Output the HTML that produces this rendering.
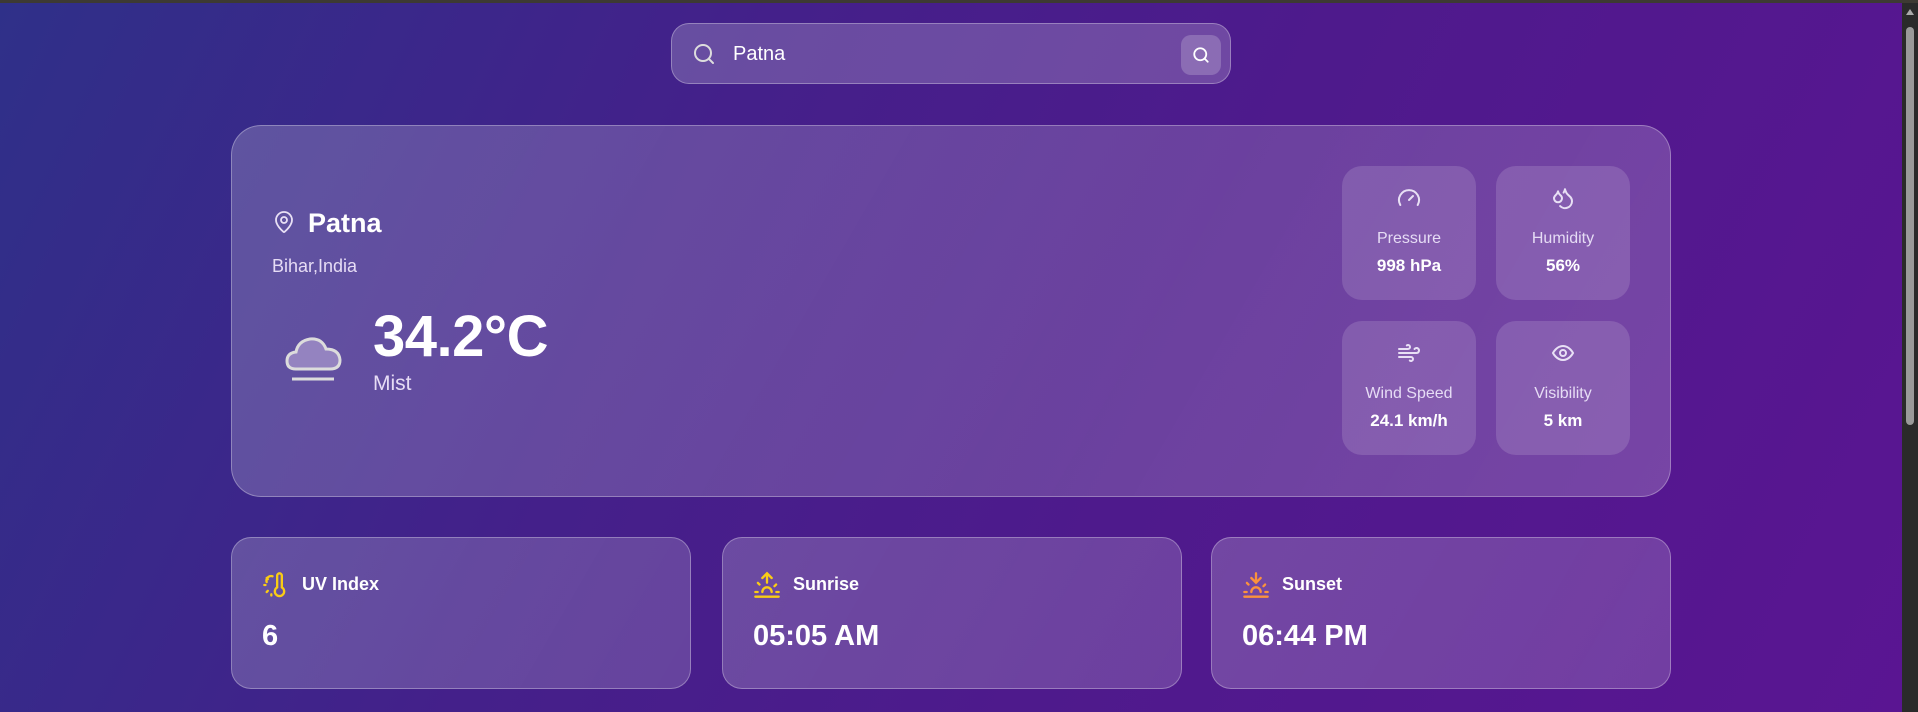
<!DOCTYPE html>
<html><head><meta charset="utf-8"><style>
*{box-sizing:border-box;margin:0;padding:0}
html,body{width:1918px;height:712px;overflow:hidden}
body{font-family:"Liberation Sans",sans-serif;color:#fff;background:linear-gradient(115deg,#2f3089 0%,#44208a 35%,#4e1a8c 60%,#5a1592 100%);position:relative}
.topbar{position:absolute;left:0;top:0;width:1918px;height:3px;background:#3d3a33}
.sb{position:absolute;right:0;top:3px;width:16px;height:709px;background:#2a2a2a}
.sb .th{position:absolute;left:4px;top:24px;width:8px;height:398px;background:#9a9a9a;border-radius:4px}
.sb .ar{position:absolute;left:4px;top:6px;width:0;height:0;border-left:4px solid transparent;border-right:4px solid transparent;border-bottom:6px solid #aaa}
.glass{background:rgba(255,255,255,0.17);border:1px solid rgba(255,255,255,0.3)}
.search{position:absolute;left:671px;top:23px;width:560px;height:61px;border-radius:18px;background:rgba(255,255,255,0.2)}
.search .t{position:absolute;left:61px;top:19px;font-size:20px;color:#fff}
.search .ic{position:absolute;left:20px;top:18px}
.search .btn{position:absolute;right:9px;top:11px;width:40px;height:40px;border-radius:10px;background:rgba(255,255,255,0.2)}
.main{position:absolute;left:231px;top:125px;width:1440px;height:372px;border-radius:30px;background:linear-gradient(120deg,rgba(255,255,255,0.2),rgba(255,255,255,0.17) 60%,rgba(255,255,255,0.2))}
.city{position:absolute;left:76px;top:82px;font-size:27px;font-weight:bold}
.pin{position:absolute;left:40px;top:84px}
.region{position:absolute;left:40px;top:130px;font-size:18px;color:#e6dcf5}
.temp{position:absolute;left:141px;top:182px;font-size:58px;line-height:1;font-weight:bold;letter-spacing:-0.5px}
.cond{position:absolute;left:141px;top:246px;font-size:21px;color:#e6dcf5}
.cloud{position:absolute;left:52px;top:203px}
.tile{position:absolute;width:134px;height:134px;border-radius:20px;background:rgba(255,255,255,0.14);text-align:center}
.tile svg{position:absolute;left:55px;top:20px}
.tile .l{position:absolute;left:0;right:0;top:64px;font-size:16px;color:#e6dcf5}
.tile .v{position:absolute;left:0;right:0;top:90px;font-size:17px;font-weight:bold}
.card{position:absolute;top:537px;width:460px;height:152px;border-radius:20px;background:linear-gradient(120deg,rgba(255,255,255,0.2),rgba(255,255,255,0.17))}
.card svg{position:absolute;left:30px;top:33px}
.card .l{position:absolute;left:70px;top:36px;font-size:18px;font-weight:bold}
.card .v{position:absolute;left:30px;top:82px;font-size:29px;font-weight:bold}
</style></head><body>
<div class="topbar"></div>
<div class="search glass">
<svg class="ic" width="24" height="24" viewBox="0 0 24 24" fill="none" stroke="#ddd" stroke-width="2" stroke-linecap="round"><circle cx="11" cy="11" r="8"/><path d="M21 21l-4.3-4.3"/></svg>
<div class="t">Patna</div>
<div class="btn"><svg style="position:absolute;left:11px;top:11px" width="18" height="18" viewBox="0 0 24 24" fill="none" stroke="#fff" stroke-width="2.4" stroke-linecap="round"><circle cx="11" cy="11" r="8"/><path d="M21 21l-4.3-4.3"/></svg></div>
</div>
<div class="main glass">
<svg class="pin" width="24" height="24" viewBox="0 0 24 24" fill="none" stroke="#e8e0f5" stroke-width="1.8" stroke-linecap="round" stroke-linejoin="round"><path d="M20 10c0 5-5.5 10.2-7.4 11.8a1 1 0 0 1-1.2 0C9.5 20.2 4 15 4 10a8 8 0 0 1 16 0"/><circle cx="12" cy="10" r="3"/></svg>
<div class="city">Patna</div>
<div class="region">Bihar,India</div>
<svg class="cloud" width="60" height="54" viewBox="0 0 60 54"><path d="M12 40 Q3 40 3 32 Q3 24 12 23 Q14 12 26 10 Q38 9 42 20 Q55 20 56 31 Q56 40 46 40 Z" fill="#9483c0" stroke="#dcdcdc" stroke-width="3"/><path d="M8 50H50" stroke="#dcdcdc" stroke-width="3"/></svg>
<div class="temp">34.2°C</div>
<div class="cond">Mist</div>
<div class="tile" style="left:1110px;top:40px"><svg width="24" height="24" viewBox="0 0 24 24" fill="none" stroke="#e8e0f5" stroke-width="2" stroke-linecap="round"><path d="M12 14l4-4"/><path d="M3.3 19a10 10 0 1 1 17.4 0"/></svg><div class="l">Pressure</div><div class="v">998 hPa</div></div>
<div class="tile" style="left:1264px;top:40px"><svg width="24" height="24" viewBox="0 0 24 24" fill="none" stroke="#e8e0f5" stroke-width="2" stroke-linecap="round" stroke-linejoin="round"><path d="M7 16.3c2.2 0 4-1.8 4-4 0-1.2-.6-2.3-1.8-3.3S7.3 6.6 7 5.3c-.3 1.3-1 2.6-2.2 3.7S3 11.1 3 12.3c0 2.2 1.8 4 4 4z"/><path d="M12.6 6.6A11 11 0 0 0 14 3.2c.5 2.5 2 4.9 4 6.5s3 3.5 3 5.5a6.98 6.98 0 0 1-11.9 4.9"/></svg><div class="l">Humidity</div><div class="v">56%</div></div>
<div class="tile" style="left:1110px;top:195px"><svg width="24" height="24" viewBox="0 0 24 24" fill="none" stroke="#e8e0f5" stroke-width="2" stroke-linecap="round"><path d="M12.8 19.6A2 2 0 1 0 14 16H2"/><path d="M17.5 8a2.5 2.5 0 1 1 2 4H2"/><path d="M9.8 4.4A2 2 0 1 1 11 8H2"/></svg><div class="l">Wind Speed</div><div class="v">24.1 km/h</div></div>
<div class="tile" style="left:1264px;top:195px"><svg width="24" height="24" viewBox="0 0 24 24" fill="none" stroke="#e8e0f5" stroke-width="2" stroke-linecap="round"><path d="M2 12s3.5-7 10-7 10 7 10 7-3.5 7-10 7S2 12 2 12z"/><circle cx="12" cy="12" r="3"/></svg><div class="l">Visibility</div><div class="v">5 km</div></div>
</div>
<div class="card glass" style="left:231px"><svg width="28" height="28" viewBox="0 0 24 24" fill="none" stroke="#facc15" stroke-width="2" stroke-linecap="round"><path d="M17 14V4a2 2 0 0 0-4 0v10a4 4 0 1 0 4 0z"/><path d="M9 4.5a4 4 0 0 0-5 5M2 12h1M4 18l1-1M8 21v-1M4 6l1 1"/></svg><div class="l">UV Index</div><div class="v">6</div></div>
<div class="card glass" style="left:722px"><svg width="28" height="28" viewBox="0 0 24 24" fill="none" stroke="#facc15" stroke-width="2" stroke-linecap="round"><path d="M12 2v8M8 6l4-4 4 4M4.2 10.2l1.4 1.4M2 18h2M20 18h2M19.8 11.6l-1.4 1.4M22 22H2M16 18a4 4 0 0 0-8 0"/></svg><div class="l">Sunrise</div><div class="v">05:05 AM</div></div>
<div class="card glass" style="left:1211px"><svg width="28" height="28" viewBox="0 0 24 24" fill="none" stroke="#fb923c" stroke-width="2" stroke-linecap="round"><path d="M12 10V2M16 6l-4 4-4-4M4.2 10.2l1.4 1.4M2 18h2M20 18h2M19.8 11.6l-1.4 1.4M22 22H2M16 18a4 4 0 0 0-8 0"/></svg><div class="l">Sunset</div><div class="v">06:44 PM</div></div>
<div class="sb"><div class="ar"></div><div class="th"></div></div>
</body></html>
